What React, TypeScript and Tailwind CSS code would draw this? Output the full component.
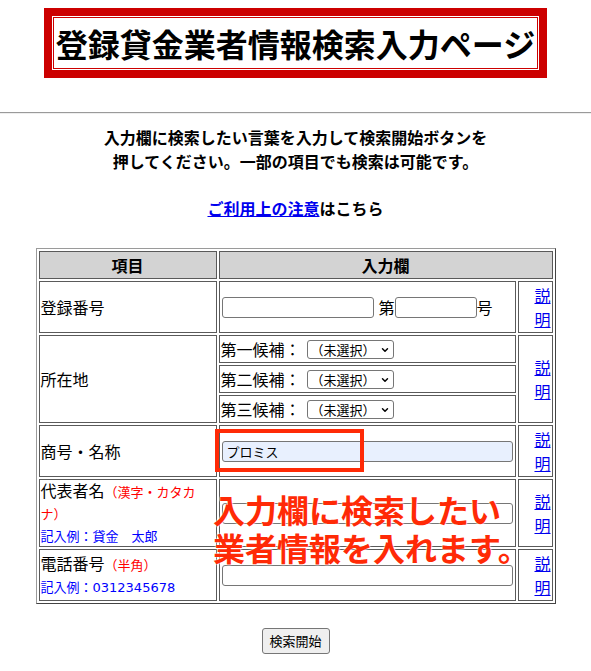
import { ChevronDown } from 'lucide-react'

const cell = 'border border-[#5a5a5a] flex items-center'

function Explain() {
  return (
    <div className={`${cell} justify-end pr-[1px] text-[16px] leading-[24px]`}>
      <a href="#" className="text-[#0000ee] underline text-right">
        説<br />明
      </a>
    </div>
  )
}

function Candidate({ label }: { label: string }) {
  return (
    <div className={`${cell} h-[28px] px-[1px] text-[16px]`}>
      <span>{label}：</span>
      <span className="relative ml-[6px] inline-flex">
        <select className="appearance-none h-[19px] w-[87px] border border-[#767676] rounded-[3px] bg-white text-[13px] leading-[17px] pl-[3px] text-black">
          <option>（未選択）</option>
        </select>
        <ChevronDown
          className="absolute right-[4px] top-[5px] pointer-events-none"
          size={10}
          strokeWidth={3.5}
        />
      </span>
    </div>
  )
}

export default function App() {
  return (
    <div className="relative w-full bg-white pt-[8px] pb-[20px] text-black font-['Noto_Sans_CJK_JP',sans-serif]">
      {/* title */}
      <div className="mx-auto w-[503px] border-[8px] border-[#cc0000] bg-white p-[1px]">
        <div className="h-[52px] border border-[#cc0000] flex items-center justify-center whitespace-nowrap text-[32px] font-bold leading-none">
          登録貸金業者情報検索入力ページ
        </div>
      </div>

      <div className="mt-[34px] border-t border-b border-t-[#9a9a9a] border-b-[#eeeeee]" />

      <p className="mt-[11px] text-center text-[16px] font-bold leading-[24px]">
        入力欄に検索したい言葉を入力して検索開始ボタンを
        <br />
        押してください。一部の項目でも検索は可能です。
      </p>

      <p className="mt-[23px] text-center text-[16px] font-bold leading-[24px]">
        <a href="#" className="text-[#0000ee] underline">ご利用上の注意</a>はこちら
      </p>

      {/* search form */}
      <div className="mx-auto mt-[28px] w-[520px] grid grid-cols-[178px_297px_35px] grid-rows-[28px_52px_88px_52px_68px_52px] gap-[2px] p-[2px] border border-t-[#9a9a9a] border-l-[#9a9a9a] border-r-[#444444] border-b-[#444444] text-[16px]">
        <div className={`${cell} justify-center bg-[#d3d3d3] font-bold`}>項目</div>
        <div className={`${cell} col-span-2 justify-center bg-[#d3d3d3] font-bold`}>入力欄</div>

        <div className={`${cell} px-[1px]`}>登録番号</div>
        <div className={`${cell} px-[2px]`}>
          <input className="h-[21px] w-[152px] border border-[#767676] rounded-[3px] bg-white px-[3px] text-[13px]" />
          <span className="ml-[5px]">第</span>
          <input className="h-[21px] w-[82px] border border-[#767676] rounded-[3px] bg-white px-[3px] text-[13px]" />
          <span>号</span>
        </div>
        <Explain />

        <div className={`${cell} px-[1px]`}>所在地</div>
        <div className="flex flex-col gap-[2px]">
          <Candidate label="第一候補" />
          <Candidate label="第二候補" />
          <Candidate label="第三候補" />
        </div>
        <Explain />

        <div className={`${cell} px-[1px]`}>商号・名称</div>
        <div className={`${cell} px-[2px]`}>
          <input
            defaultValue="プロミス"
            className="h-[21px] w-full border border-[#767676] rounded-[3px] bg-[#e8f0fe] px-[4px] text-[13px]"
          />
        </div>
        <Explain />

        <div className={`${cell} px-[1px]`}>
          <div className="leading-[20px]">
            代表者名<span className="text-[13px] text-[#ff0000]">（漢字・カタカ<br />ナ）</span>
            <br />
            <span className="text-[13px] text-[#0000ff]">記入例：貸金　太郎</span>
          </div>
        </div>
        <div className={`${cell} px-[2px]`}>
          <input className="h-[21px] w-full border border-[#767676] rounded-[3px] bg-white px-[4px] text-[13px]" />
        </div>
        <Explain />

        <div className={`${cell} px-[1px]`}>
          <div className="leading-[20px]">
            電話番号<span className="text-[13px] text-[#ff0000]">（半角）</span>
            <br />
            <span className="text-[13px] text-[#0000ff]">
              記入例：<span className="font-['DejaVu_Sans','Noto_Sans_CJK_JP',sans-serif]">0312345678</span>
            </span>
          </div>
        </div>
        <div className={`${cell} px-[2px]`}>
          <input className="h-[21px] w-full border border-[#767676] rounded-[3px] bg-white px-[4px] text-[13px]" />
        </div>
        <Explain />
      </div>

      <div className="mt-[24px] flex justify-center">
        <button className="h-[26px] w-[68px] border border-[#767676] rounded-[3px] bg-[#efefef] text-[13px]">
          検索開始
        </button>
      </div>

      {/* annotation overlay */}
      <div className="absolute left-[215px] top-[429px] h-[43px] w-[149px] border-[4px] border-[#ff2a06]" />
      <div className="absolute left-[213px] top-[490px] whitespace-nowrap text-[32px] font-bold leading-[38px] text-[#ff2a06] [text-shadow:0_0_2px_#fff,0_0_2px_#fff]">
        入力欄に検索したい
        <br />
        業者情報を入れます。
      </div>
    </div>
  )
}
